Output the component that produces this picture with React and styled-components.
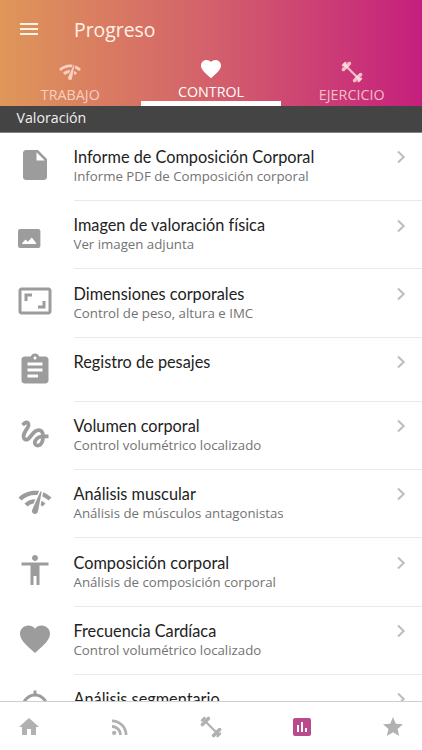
import React from "react";
import styled, { createGlobalStyle } from "styled-components";
import {
  MdAccessibility,
  MdAspectRatio,
  MdAssignment,
  MdFavorite,
  MdGesture,
  MdGpsNotFixed,
  MdHome,
  MdInsertChart,
  MdInsertDriveFile,
  MdMenu,
  MdNetworkCheck,
  MdRssFeed,
  MdStar,
} from "react-icons/md";

const Dumbbell = ({ size = 24 }) => (
  <svg width={size} height={size} viewBox="0 0 24 24" fill="none" stroke="currentColor">
    <path d="M6 6l12 12" strokeWidth="2.2" />
    <path d="M3.4 9.4l6-6M14.6 20.6l6-6" strokeWidth="3.6" strokeLinecap="round" />
    <path d="M2.9 5.5l2.6-2.6M18.5 21.1l2.6-2.6" strokeWidth="2.4" strokeLinecap="round" />
    <path d="M3.5 3.5l3 3M17.5 17.5l3 3" strokeWidth="3" />
  </svg>
);

const Photo = () => (
  <svg width="23" height="19" viewBox="0 0 23 19">
    <rect width="22.4" height="19" rx="2.2" fill="currentColor" />
    <path d="M4.3 14.9v-1l3.2-3.3 2.4 2.2 3.9-4.4 4.3 5.5v1z" fill="#fff" />
  </svg>
);

const Chevron = () => (
  <svg width="10" height="14" viewBox="0 0 10 14" fill="none" stroke="currentColor">
    <path d="M2 1.5L7.7 7 2 12.5" strokeWidth="2" />
  </svg>
);

const tabs = [
  { label: "TRABAJO", icon: <MdNetworkCheck size={24} /> },
  { label: "CONTROL", icon: <MdFavorite size={24} />, active: true },
  { label: "EJERCICIO", icon: <Dumbbell /> },
];

const items = [
  {
    title: "Informe de Composición Corporal",
    text: "Informe PDF de Composición corporal",
    icon: <MdInsertDriveFile />,
  },
  { title: "Imagen de valoración física", text: "Ver imagen adjunta", icon: <Photo />, small: true },
  { title: "Dimensiones corporales", text: "Control de peso, altura e IMC", icon: <MdAspectRatio /> },
  { title: "Registro de pesajes", icon: <MdAssignment /> },
  { title: "Volumen corporal", text: "Control volumétrico localizado", icon: <MdGesture /> },
  { title: "Análisis muscular", text: "Análisis de músculos antagonistas", icon: <MdNetworkCheck /> },
  { title: "Composición corporal", text: "Análisis de composición corporal", icon: <MdAccessibility /> },
  { title: "Frecuencia Cardíaca", text: "Control volumétrico localizado", icon: <MdFavorite /> },
  { title: "Análisis segmentario", icon: <MdGpsNotFixed /> },
];

const nav = [
  { name: "Inicio", icon: <MdHome size={24} /> },
  { name: "Noticias", icon: <MdRssFeed size={24} /> },
  { name: "Ejercicio", icon: <Dumbbell /> },
  { name: "Progreso", icon: <MdInsertChart size={24} />, active: true },
  { name: "Favoritos", icon: <MdStar size={24} /> },
];

const App = () => (
  <>
    <GlobalStyle />
    <Screen>
      <Header>
        <TopBar>
          <MdMenu size={24} />
          <PageTitle>Progreso</PageTitle>
        </TopBar>
        <Tabs>
          {tabs.map((t) => (
            <Tab key={t.label} $active={t.active}>
              {t.icon}
              <TabLabel>{t.label}</TabLabel>
            </Tab>
          ))}
        </Tabs>
      </Header>
      <Section>Valoración</Section>
      <List>
        {items.map((item) => (
          <Row key={item.title}>
            <IconCell $small={item.small}>{item.icon}</IconCell>
            <Content $short={!item.text}>
              <div>
                <Title>{item.title}</Title>
                {item.text && <Text>{item.text}</Text>}
              </div>
              <Chevron />
            </Content>
          </Row>
        ))}
      </List>
      <BottomNav>
        {nav.map((n) => (
          <NavItem key={n.name} aria-label={n.name} $active={n.active}>
            {n.icon}
          </NavItem>
        ))}
      </BottomNav>
    </Screen>
  </>
);

export default App;

// Styled Components

const GlobalStyle = createGlobalStyle`
  * {
    box-sizing: border-box;
  }

  body {
    margin: 0;
    overflow: hidden;
    background: #fff;
  }
`;

const Screen = styled.div`
  display: flex;
  flex-direction: column;
  height: 750px;
  width: 422px;
  overflow: hidden;
  font-family: "Open Sans", "Noto Sans", sans-serif;
`;

const Header = styled.header`
  flex: none;
  height: 106px;
  background: linear-gradient(90deg, #df9759 0%, #d3606b 50%, #c51f7d 100%);
  color: #fff;
`;

const TopBar = styled.div`
  display: flex;
  align-items: center;
  gap: 33px;
  height: 57px;
  padding-left: 17px;
  color: #fff3e8;
`;

const PageTitle = styled.h1`
  margin: 2px 0 0;
  font-size: 19.4px;
  font-weight: 400;
  line-height: 28px;
`;

const Tabs = styled.nav`
  display: grid;
  grid-template-columns: repeat(3, 1fr);
  grid-template-rows: 49px;
`;

const Tab = styled.div`
  display: flex;
  flex-direction: column;
  align-items: center;
  padding-top: ${({ $active }) => ($active ? "0" : "3px")};
  border-bottom: ${({ $active }) => ($active ? "5px solid #fff" : "none")};
  color: ${({ $active }) => ($active ? "#fff" : "rgba(255, 226, 222, 0.8)")};

  svg {
    flex: none;
  }
`;

const TabLabel = styled.span`
  font-size: 14.3px;
  line-height: 22px;
`;

const Section = styled.div`
  flex: none;
  height: 26.8px;
  padding-left: 16.5px;
  background: #444;
  border-bottom: 1px solid #858585;
  color: #f0f0f0;
  font-size: 14.2px;
  line-height: 23.5px;
`;

const List = styled.div`
  flex: 1;
  min-height: 0;
  overflow: hidden;
`;

const Row = styled.div`
  display: flex;
`;

const IconCell = styled.div`
  flex: none;
  width: 73.5px;
  padding: ${({ $small }) => ($small ? "28px 0 0 17.6px" : "14px 0 0 16.6px")};
  color: #9c9c9c;
  font-size: 36px;

  svg {
    display: block;
  }
`;

const Content = styled.div`
  flex: 1;
  display: flex;
  justify-content: space-between;
  align-items: flex-start;
  height: ${({ $short }) => ($short ? "64px" : "68.3px")};
  padding: 13.3px 16px 0 0;
  border-bottom: 1px solid #e9e9e9;

  > svg {
    margin-top: 4.2px;
    color: #bdbdbd;
  }
`;

const Title = styled.div`
  color: #222;
  font-family: Lato, sans-serif;
  font-size: 16.3px;
  font-variant-ligatures: none;
  line-height: 21px;
`;

const Text = styled.div`
  color: #737373;
  font-size: 13.25px;
  line-height: 19px;
`;

const BottomNav = styled.nav`
  flex: none;
  display: flex;
  justify-content: space-between;
  height: 49px;
  padding: 13px 17px 0;
  border-top: 1px solid #cfcfcf;
  background: #fff;
`;

const NavItem = styled.span`
  color: ${({ $active }) => ($active ? "#b94a8b" : "#b1b1b1")};
`;
